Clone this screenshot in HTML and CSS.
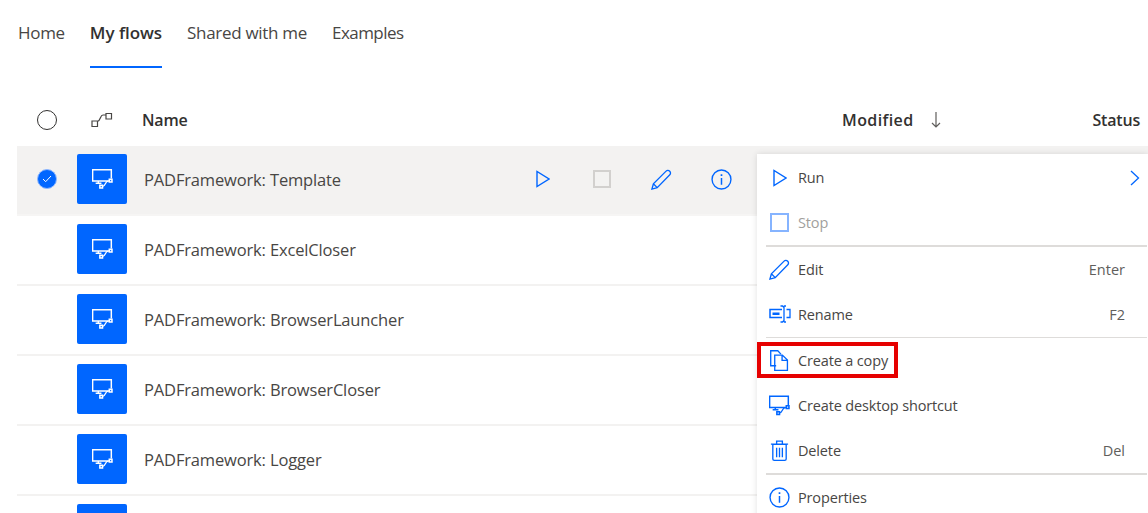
FILE: index.html
```html
<!DOCTYPE html>
<html lang="en">
<head>
  <meta charset="UTF-8">
  <title>My flows</title>
  <link rel="stylesheet" href="styles.css">
</head>
<body>
<svg class="defs" width="0" height="0">
  <symbol id="i-desktop" viewBox="0 0 20 19">
    <path d="M16 11.400H.6V.6h17.800v8.500M6 11.500v2.300M3.500 13.500h5.500" fill="none" stroke="currentColor" stroke-width="1.400"/>
    <path d="M10 16.500c3.500 0 1.500-4.500 6-5.200" fill="none" stroke="currentColor" stroke-width="1.200"/>
    <path d="M7.500 15.500h2.500V18H7.500zM16.500 9.800H19v2.500h-2.500z" fill="none" stroke="currentColor" stroke-width="1.500"/>
  </symbol>
  <symbol id="i-play" viewBox="0 0 14 18">
    <path d="M1 1.500v15L13 9z" fill="none" stroke="currentColor" stroke-width="1.400"/>
  </symbol>
  <symbol id="i-pencil" viewBox="0 0 22 22">
    <path d="M1 21l1.500-5.500L15.800 2.200c1-1 2.700-1 3.800.1s1.100 2.800.1 3.800L6.500 19.500zM2.500 15.500l4 4" fill="none" stroke="currentColor" stroke-width="1.400"/>
  </symbol>
  <symbol id="i-info" viewBox="0 0 20 20">
    <circle cx="10" cy="10" r="9" fill="none" stroke="currentColor" stroke-width="1.300"/>
    <path d="M9.300 8.500h1.400v6.500H9.300zM9.200 5h1.600v1.700H9.200z" fill="currentColor"/>
  </symbol>
  <symbol id="i-rename" viewBox="0 0 22 18">
    <path d="M13 4.500H1v8h12" fill="none" stroke="currentColor" stroke-width="1.500"/>
    <path d="M3.500 7.500h7v2.500h-7z" fill="currentColor"/>
    <path d="M11.500 1h2l1 1 1-1h1.500M15 2v14M11.500 17h2l1-1 1 1h1.500M17.500 4.500H21v8h-3.500" fill="none" stroke="currentColor" stroke-width="1.300"/>
  </symbol>
  <symbol id="i-copy" viewBox="0 0 20 22">
    <path d="M6.500 16.500H.8V.8h7.400l3.300 3.500" fill="none" stroke="currentColor" stroke-width="1.400"/>
    <path d="M5 5.300h8l5.300 5.300v10.700H5zM12.700 5.500v5.300h5.500" fill="none" stroke="currentColor" stroke-width="1.400"/>
  </symbol>
  <symbol id="i-delete" viewBox="0 0 18 22">
    <path d="M2 4.500h14v15.300c0 .9-.6 1.500-1.500 1.500h-11c-.9 0-1.500-.6-1.500-1.500zM0 4.300h18M6 4V1.200h6V4M6 8v10M9 8v10M12 8v10" fill="none" stroke="currentColor" stroke-width="1.400"/>
  </symbol>
</svg>

<div class="page">
  <ul class="tabs">
    <li>Home</li>
    <li class="active">My flows</li>
    <li>Shared with me</li>
    <li class="last">Examples</li>
  </ul>

  <div class="head">
    <span class="check"><span class="radio"></span></span>
    <span class="type">
      <svg width="22" height="16" viewBox="0 0 22 16" fill="none" stroke="#484644" stroke-width="1.200">
        <path d="M1 9h5.500v5.500H1zM15 1.500h5.500V7H15zM6.500 9.500c3.500-1 2.500-6.500 5.500-6.500h3"/>
      </svg>
    </span>
    <span class="head-name">Name</span>
    <span class="head-mod">Modified
      <svg class="arrow" width="10" height="16" viewBox="0 0 10 16" fill="none" stroke="#605e5c" stroke-width="1.200"><path d="M5 0v15M1 11l4 4 4-4"/></svg>
    </span>
    <span class="head-status">Status</span>
  </div>

  <div class="row selected">
    <span class="check"><span class="radio on">
      <svg width="10" height="8" viewBox="0 0 10 8" fill="none" stroke="#fff" stroke-width="1"><path d="M1 4l2.700 2.700L9 1"/></svg>
    </span></span>
    <span class="tile"><svg class="tile-icon"><use href="#i-desktop"/></svg></span>
    <span class="name">PADFramework: Template</span>
    <span class="actions">
      <svg class="act-play"><use href="#i-play"/></svg>
      <span class="act-stop"></span>
      <svg class="act-icon"><use href="#i-pencil"/></svg>
      <svg class="act-icon"><use href="#i-info"/></svg>
    </span>
  </div>
  <div class="row">
    <span class="check"></span>
    <span class="tile"><svg class="tile-icon"><use href="#i-desktop"/></svg></span>
    <span class="name">PADFramework: ExcelCloser</span>
  </div>
  <div class="row">
    <span class="check"></span>
    <span class="tile"><svg class="tile-icon"><use href="#i-desktop"/></svg></span>
    <span class="name">PADFramework: BrowserLauncher</span>
  </div>
  <div class="row">
    <span class="check"></span>
    <span class="tile"><svg class="tile-icon"><use href="#i-desktop"/></svg></span>
    <span class="name">PADFramework: BrowserCloser</span>
  </div>
  <div class="row">
    <span class="check"></span>
    <span class="tile"><svg class="tile-icon"><use href="#i-desktop"/></svg></span>
    <span class="name">PADFramework: Logger</span>
  </div>
  <div class="row">
    <span class="check"></span>
    <span class="tile"></span>
  </div>

  <div class="menu">
    <div class="item">
      <span class="ico"><svg class="play-big"><use href="#i-play"/></svg></span>
      <span class="label">Run</span>
      <svg class="chevron" width="10" height="16" viewBox="0 0 10 16" fill="none" stroke="currentColor" stroke-width="1.300"><path d="M1 1l7.500 7L1 15"/></svg>
    </div>
    <div class="item disabled">
      <span class="ico"><span class="stop-big"></span></span>
      <span class="label">Stop</span>
    </div>
    <div class="sep"></div>
    <div class="item">
      <span class="ico"><svg class="s21"><use href="#i-pencil"/></svg></span>
      <span class="label">Edit</span>
      <span class="key">Enter</span>
    </div>
    <div class="item">
      <span class="ico"><svg class="rename"><use href="#i-rename"/></svg></span>
      <span class="label">Rename</span>
      <span class="key">F2</span>
    </div>
    <div class="sep"></div>
    <div class="item marked">
      <span class="ico"><svg class="s21"><use href="#i-copy"/></svg></span>
      <span class="label">Create a copy</span>
      <span class="redbox"></span>
    </div>
    <div class="item">
      <span class="ico"><svg class="s21"><use href="#i-desktop"/></svg></span>
      <span class="label">Create desktop shortcut</span>
    </div>
    <div class="item">
      <span class="ico"><svg class="s21"><use href="#i-delete"/></svg></span>
      <span class="label">Delete</span>
      <span class="key">Del</span>
    </div>
    <div class="sep"></div>
    <div class="item">
      <span class="ico"><svg class="s21"><use href="#i-info"/></svg></span>
      <span class="label">Properties</span>
    </div>
  </div>
</div>
</body>
</html>
```

FILE: styles.css
```css
* {
  padding: 0;
  margin: 0;
  list-style: none;
  box-sizing: border-box;
}

html, body {
  height: 100%;
  overflow: hidden;
  background: #fff;
}

body {
  font-family: "Open Sans", "Noto Sans", sans-serif;
  color: #323130;
}

.defs {
  position: absolute;
}

.page {
  position: relative;
  height: 513px;
  overflow: hidden;
  padding-left: 17px;
}

/* tabs */
.tabs {
  display: flex;
  gap: 25px;
  height: 68px;
  padding-left: 1px;
  font-size: 17px;
  letter-spacing: -0.3px;
}

.tabs li {
  padding-top: 20px;
  line-height: 25px;
  color: #484644;
}

.tabs li.active {
  font-weight: 600;
  color: #323130;
  letter-spacing: -0.05px;
  border-bottom: 2px solid #0066ff;
}

.tabs li.last {
  letter-spacing: -0.55px;
}

/* list header */
.head {
  display: flex;
  align-items: center;
  height: 78px;
  padding-top: 26px;
  font-size: 16px;
  font-weight: 600;
  letter-spacing: -0.2px;
}

.check {
  display: flex;
  justify-content: center;
  width: 60px;
  flex: none;
}

.radio {
  display: flex;
  align-items: center;
  justify-content: center;
  width: 20px;
  height: 20px;
  border: 1px solid #323130;
  border-radius: 50%;
}

.radio.on {
  background: #0066ff;
  border-color: #8fb8ff;
}

.type {
  width: 65px;
  padding-left: 14px;
  display: flex;
}

.head-name {
  flex: 1;
}

.head-mod {
  position: absolute;
  left: 842px;
  display: flex;
  align-items: center;
  letter-spacing: 0.4px;
}

.arrow {
  margin-left: 17px;
}

.head-status {
  position: absolute;
  right: 8px;
}

/* rows */
.row {
  display: flex;
  height: 70px;
  padding-top: 8px;
  border-bottom: 2px solid #f3f2f1;
}

.row.selected {
  background: #f3f2f1;
  border-bottom-color: #f6f5f4;
}

.row .check {
  height: 50px;
  align-items: center;
}

.tile {
  display: flex;
  align-items: center;
  justify-content: center;
  width: 50px;
  height: 50px;
  flex: none;
  background: #0066ff;
  border-radius: 2px;
  color: #fff;
}

.tile-icon {
  width: 21px;
  height: 20px;
}

.name {
  margin-left: 17px;
  line-height: 52px;
  font-size: 16.5px;
  letter-spacing: -0.15px;
  color: #484644;
}

.actions {
  position: absolute;
  left: 513px;
  top: 154px;
  display: grid;
  grid-template-columns: repeat(4, 59.5px);
  justify-items: center;
  align-items: center;
  height: 50px;
  color: #0066ff;
}

.act-play {
  width: 14px;
  height: 18px;
}

.act-stop {
  width: 18px;
  height: 18px;
  border: 2px solid #d2d0ce;
}

.act-icon {
  width: 21px;
  height: 21px;
}

/* context menu */
.menu {
  position: absolute;
  left: 757px;
  top: 154px;
  width: 391px;
  height: 380px;
  padding-top: 1px;
  background: #fff;
  box-shadow: 0 0 6px rgba(0, 0, 0, 0.12);
  font-size: 14.5px;
  color: #484644;
}

.item {
  position: relative;
  display: flex;
  align-items: center;
  height: 45px;
  padding-left: 12px;
  padding-right: 23px;
  color: #484644;
}

.ico {
  display: flex;
  align-items: center;
  justify-content: center;
  width: 21px;
  height: 24px;
  margin-right: 8px;
  color: #0066ff;
  flex: none;
}

.s21 {
  width: 21px;
  height: 21px;
}

.play-big {
  width: 14px;
  height: 18px;
}

.rename {
  width: 22px;
  height: 18px;
  flex: none;
}

.stop-big {
  width: 19px;
  height: 19px;
  border: 2px solid #86b4ff;
}

.disabled .label {
  color: #a19f9d;
}

.label {
  flex: 1;
  letter-spacing: -0.15px;
}

.key {
  color: #605e5c;
}

.chevron {
  position: absolute;
  right: 8px;
  top: 15px;
  color: #0066ff;
}

.sep {
  height: 1.5px;
  margin: 0 1px 0 9px;
  background: #dedcda;
}

.redbox {
  position: absolute;
  left: 0;
  top: 4px;
  width: 141px;
  height: 36px;
  border: 4.5px solid #e60000;
}
```
